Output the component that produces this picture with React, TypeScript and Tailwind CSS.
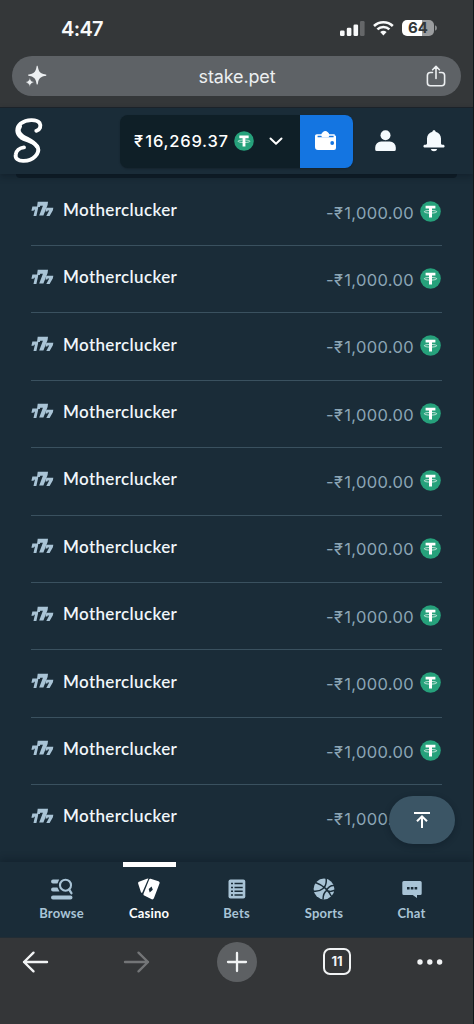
import React from "react";

const rows = Array.from({ length: 10 }, (_, i) => ({ id: i, game: "Motherclucker", currency: "-₹", amount: "1,000.00" }));

function Tether({ size }: { size: number }) {
  return (
    <svg width={size} height={size} viewBox="0 0 21 21" className="shrink-0">
      <circle cx="10.5" cy="10.5" r="10.3" fill="#26a17b" />
      <path d="M5.600 4.800h9.800v2.700h-3.400v8.900H9V7.500H5.600z" fill="#fff" />
      <path d="M9 9.500c-2.800.1-4.700.6-4.700 1.300s2.700 1.300 6.200 1.300 6.200-.6 6.200-1.300-1.900-1.200-4.700-1.300" fill="none" stroke="#fff" strokeWidth=".7" />
    </svg>
  );
}

function Sevens() {
  return (
    <svg width="23" height="16" viewBox="0 0 23 16" fill="#a9c4d6" className="shrink-0">
      <path d="M6.700.8h10.300l-.4 3.300-4.200 10.300H8.200l3.700-9.700H9.200l-.4 1.300H6z" />
      <path d="M1.400 5.600h5.900l-.3 2.200L5.400 14.900H2.500L3.900 8.700H3l-.4 1H.4z" />
      <path d="M15.300 6.700h7l-.4 2.500-3.300 5.700h-3.300l2.900-5.400h-1.500l-.4 1h-1.800z" />
    </svg>
  );
}

function StatusBar() {
  return (
    <div className="flex h-[56px] items-center pl-[61px] pr-[36px] text-[#f8f9fa]">
      <span className="mt-[1px] font-['Inter'] text-[20px] font-semibold leading-none tracking-[-0.65px]">4:47</span>
      <svg width="97" height="18" viewBox="0 0 97 18" className="ml-auto">
        <g fill="currentColor">
          <rect x="0" y="11.5" width="4.6" height="5.5" rx="1.3" />
          <rect x="6.8" y="8.8" width="4.6" height="8.2" rx="1.3" />
          <rect x="13.5" y="5.5" width="4.6" height="11.5" rx="1.3" />
          <rect x="20" y="2" width="4.6" height="15" rx="1.3" opacity=".25" />
          <path d="M40.2 13.1a4.8 4.8 0 0 1 6.4 0L43.4 16.4z" />
        </g>
        <path d="M37.4 10.6a8.7 8.7 0 0 1 12 0M34 7.2a13.5 13.5 0 0 1 18.8 0" transform="translate(0 -.2)" fill="none" stroke="currentColor" strokeWidth="2.6" />
        <path d="M67 1h15v16H67a5 5 0 0 1-5-5V6a5 5 0 0 1 5-5z" fill="#fff" />
        <path d="M82 1h7a5 5 0 0 1 5 5v6a5 5 0 0 1-5 5h-7z" fill="#9b9d9f" />
        <path d="M95 6.2q2 .6 2 2.8t-2 2.8z" fill="#8b8d8f" />
        <text x="78" y="14.4" textAnchor="middle" fill="#34383a" fontFamily="Inter" fontWeight="700" fontSize="15">64</text>
      </svg>
    </div>
  );
}

function AddressBar() {
  return (
    <div className="mx-[12px] flex h-[40px] items-center rounded-full bg-[#5e6266] pl-[14px] pr-[15px] text-[#eceff1]">
      <svg width="22" height="23" viewBox="0 0 22 23" fill="currentColor">
        <path d="M11.2.8c.5 0 .6.6.8 1.6.8 4.5 2.6 6 6.7 6.9 1.1.2 1.7.4 1.7.9s-.6.7-1.7.9c-4.1.9-5.9 2.4-6.7 6.9-.2 1-.3 1.6-.8 1.6s-.6-.6-.8-1.6c-.8-4.5-2.6-6-6.7-6.9-.9-.2-1.6-.4-1.6-.9s.7-.7 1.6-.9C7.800 8.400 9.600 6.900 10.400 2.400c.2-1 .3-1.600.8-1.600z" />
        <path d="M3.8 12.600c.7 3.100 1.400 3.800 4.500 4.700-3.100.9-3.800 1.600-4.500 4.700-.7-3.100-1.400-3.800-4.500-4.700 3.100-.9 3.800-1.600 4.500-4.700z" stroke="#5e6266" strokeWidth=".5" />
      </svg>
      <span className="flex-1 pt-[1px] text-center font-['Inter'] text-[18px] leading-none tracking-[-0.15px]">stake.pet</span>
      <svg width="20" height="22" viewBox="0 0 20 22" fill="none" stroke="currentColor" strokeWidth="1.6" strokeLinecap="round" strokeLinejoin="round">
        <path d="M6.500 7.500H4.400a3 3 0 0 0-3 3v7.200a3 3 0 0 0 3 3h11.200a3 3 0 0 0 3-3v-7.200a3 3 0 0 0-3-3h-2.100M10 13.500V1.500M6.600 4.700 10 1.300l3.400 3.400" />
      </svg>
    </div>
  );
}

function Header() {
  return (
    <header className="relative z-10 flex h-[67px] shrink-0 items-center border-t border-[#1b2229] bg-[#1a2c38] shadow-[0_3px_6px_rgba(8,18,26,0.35)]">
      <svg width="32" height="48" viewBox="0 0 32 48" className="ml-[12px] mt-[-2px] shrink-0" fill="none" stroke="#fff" strokeLinecap="round" strokeLinejoin="round">
        <path d="M24.300 14.800C28 13.800 29.400 10 27.600 7C24.500 2.800 14.500 3.300 8.700 7.500C3.800 11.700 4.300 18 9.200 21.500C14.500 25 23.500 25.500 25.800 31.400C28 37.500 21.300 44.600 11.800 44.900C6 45.200 3.100 42.400 3.700 38.600C4.200 34.800 7.500 31.800 12 31.400" strokeWidth="3.900" />
        <path d="M8 10.500C5.500 14 6.500 17.300 10.800 20.300C15.200 23.300 22.500 25.500 24.800 30.500" strokeWidth="4" />
      </svg>
      <div className="ml-[76px] flex h-[53px] w-[233px] shrink-0 overflow-hidden rounded-[8px] bg-[#0f1f27] shadow-[0_1px_2px_rgba(0,0,0,0.2)]">
        <div className="flex w-[180px] items-center pl-[14px] text-white">
          <span className="flex w-[100px] whitespace-nowrap font-['Inter'] text-[16.500px] font-medium leading-none tracking-[0.750px]"><span className="mr-[1.500px]">₹</span>16,269.37</span>
          <Tether size={20} />
          <svg width="14" height="9" viewBox="0 0 14 9" className="ml-[15px]" fill="none" stroke="#fff" strokeWidth="2" strokeLinecap="round" strokeLinejoin="round"><path d="m1.500 1.500 5.500 5.200 5.500-5.200" /></svg>
        </div>
        <div className="flex flex-1 items-center justify-center bg-[#1475e1] pb-[2px] pr-[1px]">
          <svg width="22" height="20" viewBox="0 0 22 20">
            <path d="M2.200 4.200h17.500v1.300H20a1 1 0 0 1 1 1V18a2 2 0 0 1-2 2H3a3 3 0 0 1-3-3V6.300a2 2 0 0 1 2.200-2.100z" fill="#fff" />
            <path d="M2.600 5.800h16v1.500h-16z" fill="#1475e1" />
            <path d="M7.100 7.300a3.900 3.900 0 1 1 6.400 0z" fill="#fff" />
            <circle cx="17.200" cy="13" r="1.900" fill="#1475e1" />
          </svg>
        </div>
      </div>
      <svg width="21" height="22" viewBox="0 0 21 22" fill="#f5fafd" className="ml-[22px] shrink-0">
        <circle cx="10.500" cy="5.200" r="5" />
        <path d="M6.200 11.500h8.600a6 6 0 0 1 6 6v2a1.600 1.600 0 0 1-1.600 1.600H1.800a1.600 1.600 0 0 1-1.600-1.600v-2a6 6 0 0 1 6-6z" />
      </svg>
      <svg width="22" height="22" viewBox="0 0 22 22" fill="#f5fafd" className="mb-[1px] ml-[27px] shrink-0">
        <path d="M11 .2c1 0 1.600.7 1.600 1.600 3.400.8 5.400 3.400 5.400 6.700v4.900c0 .9.600 1.300 2 1.300 1.100 0 1.600.6 1.600 1.500S21 17.600 20 17.600H2c-1 0-1.600-.6-1.600-1.400S1 14.700 2 14.700s2-.4 2-1.300V8.500c0-3.300 2-5.900 5.400-6.700C9.400.9 10 .2 11 .2zM7.800 18.900h6.400a3.250 2.700 0 0 1-6.400 0z" />
      </svg>
    </header>
  );
}

function NavItem({ label, active, children }: { label: string; active?: boolean; children: React.ReactNode }) {
  return (
    <div className={active ? "flex w-[87.500px] flex-col items-center text-white" : "flex w-[87.500px] flex-col items-center text-[#a9c4d6]"}>
      <div className={active ? "h-[5px] w-[53px] bg-white" : "h-[5px] w-[53px]"} />
      <div className="mt-[10.500px] flex h-[22px] items-center justify-center">{children}</div>
      <span className="mt-[5.500px] font-['Lato'] text-[13px] font-bold leading-[16px] tracking-[0.2px]">{label}</span>
    </div>
  );
}

function CasinoNav() {
  return (
    <nav className="relative z-10 flex h-[75px] shrink-0 justify-center bg-[#1a2c38] shadow-[0_-3px_7px_rgba(8,18,26,0.3)]">
      <NavItem label="Browse">
        <svg width="22" height="22" viewBox="0 0 22 22" fill="currentColor">
          <path d="M2 1.500h6.200L6.500 5.400H2a1.950 1.950 0 0 1 0-3.900zM2 9.500h4.400l2.100 3.900H2a1.950 1.950 0 0 1 0-3.900zM2 17.400h17.500a2 2 0 0 1 0 4H2a2 2 0 0 1 0-4z" />
          <circle cx="14.500" cy="7.200" r="5.500" fill="none" stroke="currentColor" strokeWidth="2.100" />
          <path d="m18.200 11.600 2.200 3.600" stroke="currentColor" strokeWidth="2.300" strokeLinecap="round" />
        </svg>
      </NavItem>
      <NavItem label="Casino" active>
        <svg width="22" height="22" viewBox="0 0 22 22" fill="currentColor">
          <path d="M10.400.6 4.200 14.800C3.500 14.900 3.100 14.500 2.900 13.900L.2 5.800C0 5 .2 4.200 1 3.800L8.900.7z" />
          <path fillRule="evenodd" d="m12.600.8 7.900 2.500c1 .4 1.400 1.300 1 2.200l-5.600 14.800c-.4 1-1.300 1.400-2.200 1L6.200 17.400c-.7-.4-.9-1.200-.6-2L11.200 1.500c.3-.7.7-.9 1.400-.7zm1 7.600-2.900 2.700 1 3.500 3.100-2.800z" />
        </svg>
      </NavItem>
      <NavItem label="Bets">
        <svg width="18" height="20" viewBox="0 0 18 20">
          <rect x=".5" y=".5" width="16.800" height="19" rx="2" fill="currentColor" />
          <path d="M3 4.600h2M6.500 4.600h8.200M3 8.500h2M6.500 8.500h8.200M3 12.300h2M6.500 12.300h8.200M3 16h2M6.500 16h8.200" stroke="#1a2c38" strokeWidth="1.500" />
        </svg>
      </NavItem>
      <NavItem label="Sports">
        <svg width="22" height="22" viewBox="0 0 22 22">
          <circle cx="11" cy="11" r="10.400" fill="currentColor" />
          <g fill="none" stroke="#1a2c38" strokeWidth="1.500">
            <path d="M2.500 4.500C8 6.500 15 11.500 18.800 19M.5 13.200c6.500.8 14-3 12.600-13M13.400 12.600C15 9 18 7 22 7.500M13.600 12.500c2.200 1.200 5 1.200 8.200-.2M13.400 12.700c-2.400 2-3.400 4.400-3.300 8.900" />
          </g>
        </svg>
      </NavItem>
      <NavItem label="Chat">
        <svg width="20" height="18" viewBox="0 0 20 18">
          <path d="M1.800 1h16.400a1.500 1.500 0 0 1 1.500 1.500v11a1.500 1.500 0 0 1-1.500 1.500H15v3l-4.300-3H1.800a1.500 1.500 0 0 1-1.500-1.500v-11A1.500 1.500 0 0 1 1.800 1z" fill="currentColor" />
          <path d="M5 7h2.600v2.500H5zM8.800 7h2.600v2.500H8.800zM12.600 7h2.600v2.500h-2.600z" fill="#1a2c38" />
        </svg>
      </NavItem>
    </nav>
  );
}

function BrowserToolbar() {
  return (
    <footer className="relative z-10 h-[87px] shrink-0 border-t border-[#222d35] bg-[#343638] pt-[3.500px]">
      <div className="flex h-[40px] items-center pl-[22px] text-[#f1f3f4]">
        <svg width="27" height="22" viewBox="0 0 27 22" fill="none" stroke="currentColor" strokeWidth="2.400" strokeLinecap="round" strokeLinejoin="round"><path d="M25 11H2M11.500 1.700 2 11l9.500 9.300" /></svg>
        <svg width="27" height="22" viewBox="0 0 27 22" className="ml-[74px]" fill="none" stroke="#737577" strokeWidth="2.400" strokeLinecap="round" strokeLinejoin="round"><path d="M2 11h23M15.500 1.700 25 11l-9.500 9.300" /></svg>
        <div className="ml-[67px] flex h-[40px] w-[40px] items-center justify-center rounded-full bg-[#5d6063]">
          <svg width="22" height="22" viewBox="0 0 22 22" stroke="currentColor" strokeWidth="2.300" strokeLinecap="round"><path d="M2 11h18M11 2v18" /></svg>
        </div>
        <div className="ml-[66px] flex h-[27px] w-[28px] items-center justify-center rounded-[7px] border-2 border-[#f1f3f4] font-['Inter'] text-[13px] font-bold leading-none">11</div>
        <svg width="26" height="6" viewBox="0 0 26 6" className="ml-[66px]" fill="currentColor"><circle cx="3" cy="3" r="2.700" /><circle cx="12.800" cy="3" r="2.700" /><circle cx="22.600" cy="3" r="2.700" /></svg>
      </div>
    </footer>
  );
}

export default function App() {
  return (
    <div className="flex h-[1024px] w-[474px] flex-col overflow-hidden border-r border-[#101719] bg-[#1a2c38]">
      <div className="h-[107px] shrink-0 bg-[#343739]">
        <StatusBar />
        <AddressBar />
      </div>
      <Header />
      <main className="relative min-h-0 flex-1">
        <div className="mx-[16px] h-[4px] rounded-b-[8px] bg-[#0f1d27]" />
        <div className="pl-[31px] pr-[31px] pt-[0.600px]">
          {rows.map((row) => (
            <div key={row.id} className={row.id === 9 ? "flex h-[67.400px] justify-between" : "flex h-[67.400px] justify-between border-b border-[#3a515f]"}>
              <div className="flex h-[62.400px] items-center pb-[1px]">
                <Sevens />
                <span className="ml-[9px] font-['Lato'] text-[17px] font-semibold leading-none tracking-[0.350px] text-[#f0f6fa]">{row.game}</span>
              </div>
              <div className="flex h-[65px] items-center pr-[1px]">
                <span className="mr-[6px] flex pt-[3.400px] font-['Inter'] text-[16.500px] leading-none tracking-[0.350px] text-[#8ba5b5]"><span className="mr-[1px]">{row.currency}</span>{row.amount}</span>
                <Tether size={21} />
              </div>
            </div>
          ))}
        </div>
        <button className="absolute bottom-[18px] right-[18px] flex h-[48px] w-[66px] items-center justify-center rounded-full bg-[#3b5565] text-white shadow-[0_2px_6px_rgba(8,18,26,0.3)]">
          <svg width="18" height="18" viewBox="0 0 18 18" fill="none" stroke="currentColor" strokeWidth="2"><path d="M1 2h16M9 17V6.200M4 10.300l5-5 5 5" /></svg>
        </button>
      </main>
      <CasinoNav />
      <BrowserToolbar />
    </div>
  );
}
